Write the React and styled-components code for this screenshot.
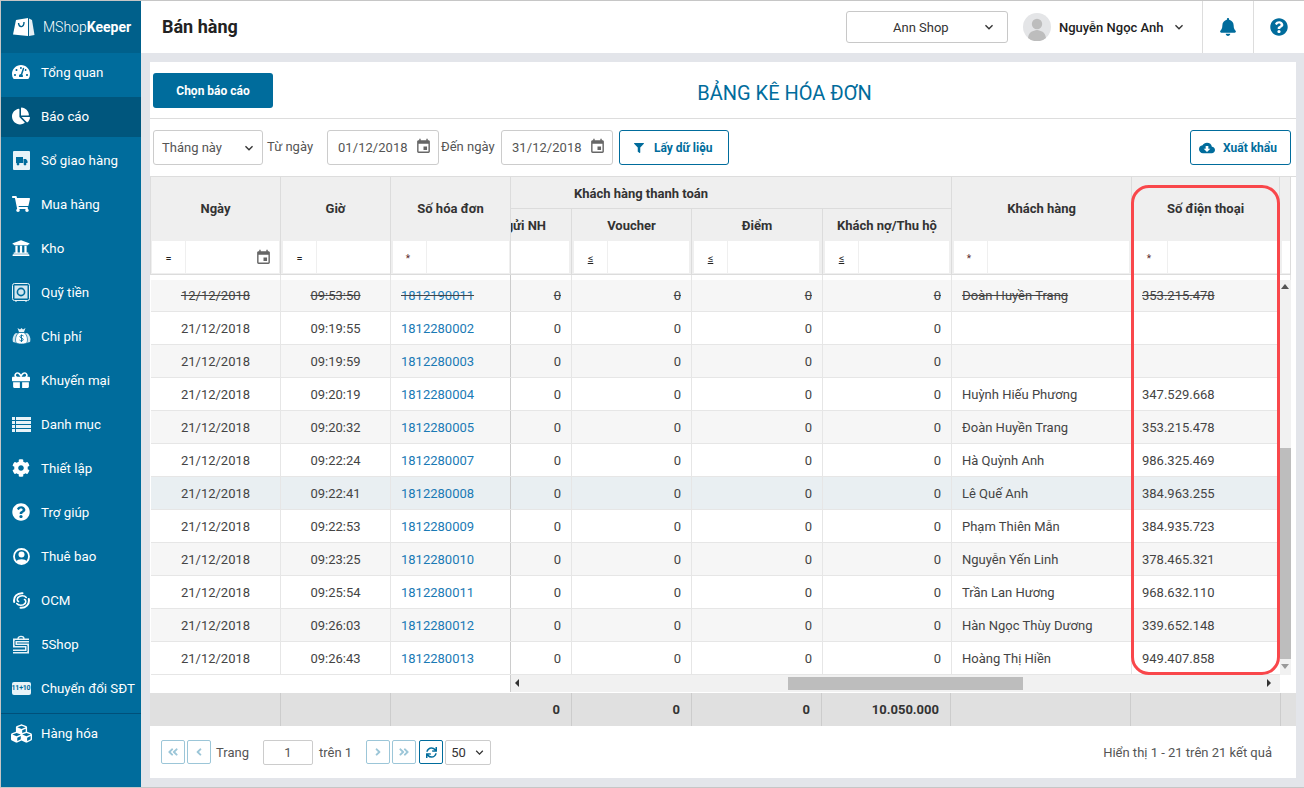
import React from 'react'
import styled, { createGlobalStyle } from 'styled-components'
import {
  FaTachometerAlt, FaChartPie, FaShoppingCart, FaUniversity, FaGift, FaCog, FaQuestionCircle,
  FaCubes, FaBell, FaFilter, FaSync, FaAngleDoubleLeft, FaAngleLeft, FaAngleRight, FaAngleDoubleRight,
} from 'react-icons/fa'
import { MdEvent, MdCloudDownload, MdKeyboardArrowDown } from 'react-icons/md'

const GlobalStyle = createGlobalStyle`
  html, body { margin: 0; padding: 0; background: #e3e5ea; }
  body { font-family: Roboto, "Noto Sans", sans-serif; font-size: 13px; color: #444; }
  * { box-sizing: border-box; }
`

const BLUE = '#006c9c'
const COLS = '130px 110px 120px 61px 120px 131px 129px 180px 148px 11px'
const BODY_COLS = '130px 110px 120px 61px 120px 131px 129px 180px 148px'

const Page = styled.div`
  width: 1304px;
  height: 788px;
  display: flex;
  border: 1px solid #c6c6c6;
  border-right: 0;
  overflow: hidden;
  background: #e3e5ea;
`
const Sidebar = styled.aside`
  width: 140px;
  flex: none;
  background: ${BLUE};
  color: #fff;
  display: flex;
  flex-direction: column;
`
const Logo = styled.div`
  height: 52px;
  flex: none;
  background: #00608b;
  display: flex;
  align-items: center;
  padding-left: 11px;
  gap: 8px;
  font-size: 14px;
  font-weight: 300;
  b { font-weight: 700; }
`
const NavList = styled.nav`
  display: flex;
  flex-direction: column;
  gap: 4px;
`
const NavItem = styled.div`
  height: 40px;
  display: flex;
  align-items: center;
  padding-bottom: 2px;
  background: ${p => (p.$active ? '#00567d' : 'transparent')};
  font-size: 13.3px;
`
const NavIcon = styled.span`
  width: 40px;
  flex: none;
  display: flex;
  justify-content: center;
  align-items: center;
  font-size: 18px;
`
const SwitchBadge = styled.span`
  width: 19px;
  height: 13px;
  border-radius: 2px;
  background: #e8f3f8;
  color: ${BLUE};
  font-size: 7px;
  font-weight: 700;
  display: flex;
  align-items: center;
  justify-content: center;
  letter-spacing: -0.2px;
`
const Divider = styled.div`
  border-top: 1px solid #00507a;
  margin-top: 4px;
`
const Main = styled.div`
  flex: 1;
  min-width: 0;
  display: flex;
  flex-direction: column;
`
const Header = styled.header`
  height: 52px;
  flex: none;
  background: #fff;
  display: flex;
  align-items: center;
  padding-left: 21px;
`
const PageTitle = styled.h1`
  flex: 1;
  margin: -2px 0 0;
  font-size: 18px;
  font-weight: 700;
  color: #222;
`
const ShopSelect = styled.div`
  width: 162px;
  height: 32px;
  border: 1px solid #c8c8c8;
  border-radius: 3px;
  display: flex;
  align-items: center;
  padding: 0 10px 0 46px;
  font-size: 13px;
  color: #333;
  justify-content: space-between;
  svg { font-size: 16px; color: #333; }
`
const UserBox = styled.div`
  width: 194px;
  flex: none;
  display: flex;
  align-items: center;
  padding-left: 15px;
  font-size: 13px;
  font-weight: 500;
  color: #222;
  gap: 8px;
  white-space: nowrap;
  svg.chev { font-size: 16px; color: #333; margin-left: -1px; }
`
const HeaderButton = styled.div`
  width: 51px;
  height: 52px;
  border-left: 1px solid #ddd;
  display: flex;
  align-items: center;
  justify-content: center;
  color: ${BLUE};
  font-size: 18px;
`
const Content = styled.div`
  flex: 1;
  min-height: 0;
  padding: 9px 8px 9px 9px;
  display: flex;
`
const Panel = styled.section`
  flex: 1;
  min-width: 0;
  background: #fff;
  display: flex;
  flex-direction: column;
`
const TitleBar = styled.div`
  height: 57px;
  flex: none;
  display: flex;
  align-items: center;
  padding-left: 3px;
  border-bottom: 1px solid #ddd;
`
const PrimaryButton = styled.button`
  width: 120px;
  height: 35px;
  margin-top: 1px;
  background: ${BLUE};
  color: #fff;
  border: 0;
  border-radius: 3px;
  font: 700 12px Roboto, sans-serif;
`
const ReportTitle = styled.h2`
  flex: 1;
  margin: 5px 0 0;
  text-align: center;
  font-size: 20px;
  font-weight: 400;
  color: ${BLUE};
`
const Toolbar = styled.div`
  height: 57px;
  flex: none;
  display: flex;
  align-items: center;
  padding: 0 4px 0 3px;
  color: #555;
`
const PeriodSelect = styled.div`
  width: 110px;
  height: 35px;
  border: 1px solid #ccc;
  border-radius: 3px;
  display: flex;
  align-items: center;
  justify-content: space-between;
  padding: 0 5px 0 8px;
  svg { font-size: 16px; color: #333; }
`
const FieldLabel = styled.span`
  margin: -2px 0 0 ${p => p.$ml || 4}px;
  width: ${p => p.$w}px;
  flex: none;
`
const DateBox = styled.div`
  width: 112px;
  height: 35px;
  border: 1px solid #ccc;
  border-radius: 3px;
  display: flex;
  align-items: center;
  justify-content: space-between;
  padding: 0 6px 0 10px;
  letter-spacing: 0.05px;
  svg { font-size: 17px; color: #666; margin-top: -2px; }
`
const OutlineButton = styled.button`
  width: ${p => p.$w}px;
  height: 35px;
  margin-left: ${p => p.$ml || 0}px;
  padding: 0 0 0 ${p => p.$pl}px;
  background: #fff;
  color: ${BLUE};
  border: 1px solid ${BLUE};
  border-radius: 3px;
  display: flex;
  align-items: center;
  gap: ${p => p.$gap}px;
  font: 700 12px Roboto, sans-serif;
`
const TableWrap = styled.div`
  flex: none;
  display: flex;
  flex-direction: column;
  padding-left: 1px;
  border-top: 1px solid #ddd;
`
const Head = styled.div`
  width: 1140px;
  flex: none;
  display: grid;
  grid-template-columns: ${COLS};
  grid-template-rows: 32px 32px 34px;
  background: #efefef;
  border-left: 1px solid #ddd;
  margin-left: -1px;
  font-weight: 700;
  color: #333;
  font-size: 13px;
`
const HeadCell = styled.div`
  grid-column: ${p => p.$col};
  grid-row: ${p => p.$row};
  display: flex;
  align-items: center;
  justify-content: ${p => (p.$end ? 'flex-end' : 'center')};
  padding-right: ${p => p.$pr || 0}px;
  padding-bottom: ${p => p.$pb || 0}px;
  padding-top: ${p => p.$pt || 0}px;
  border-right: 1px solid #dcdcdc;
  border-bottom: ${p => (p.$line ? '1px solid #dcdcdc' : '0')};
  white-space: nowrap;
  overflow: hidden;
`
const FilterCell = styled.div`
  display: flex;
  grid-row: 3;
  grid-column: ${p => p.$col};
  padding: 0 ${p => p.$pr ?? 1}px 1px ${p => p.$pl ?? 2}px;
  border-right: 1px solid #dcdcdc;
  border-bottom: 1px solid #dcdcdc;
  gap: 1px;
  background: #efefef;
`
const FilterOp = styled.span`
  width: 33px;
  flex: none;
  background: #fff;
  display: flex;
  align-items: center;
  justify-content: center;
  font-size: ${p => (p.$star ? 10 : 11)}px;
  font-weight: 400;
  color: ${p => (p.$star ? '#5c2b2b' : '#222')};
  padding: 2px ${p => (p.$star ? 3 : 0)}px 0 0;
  u { text-decoration-thickness: 1px; }
`
const FilterInput = styled.span`
  flex: 1;
  min-width: 0;
  background: #fff;
  display: flex;
  align-items: center;
  justify-content: flex-end;
  padding-right: 7px;
  svg { font-size: 17px; color: #666; }
`
const Spacer = styled.div`
  height: 5px;
  flex: none;
  width: 1140px;
  display: grid;
  grid-template-columns: ${COLS};
  div { border-right: 1px solid #e6e6e6; }
  div:nth-child(3) { border-right-color: #ccc; }
`
const BodyArea = styled.div`
  display: flex;
  flex: none;
  width: 1140px;
`
const Rows = styled.div`
  width: 1129px;
`
const Row = styled.div`
  display: grid;
  grid-template-columns: ${BODY_COLS};
  height: ${p => p.$h || 33}px;
  background: ${p => p.$bg};
  border-bottom: 1px solid #e6e6e6;
  text-decoration: ${p => (p.$struck ? 'line-through' : 'none')};
`
const Cell = styled.div`
  display: flex;
  align-items: center;
  justify-content: ${p => p.$align};
  padding: 0 10px;
  border-right: 1px solid ${p => (p.$frozen ? '#ccc' : '#e6e6e6')};
  white-space: nowrap;
  color: ${p => (p.$link ? '#1a7ab5' : '#444')};
  &:last-child { border-right: 0; }
`
const VScroll = styled.div`
  width: 11px;
  background: #f1f1f1;
  position: relative;
`
const ScrollArrow = styled.i`
  position: absolute;
  width: 0;
  height: 0;
  border: 4px solid transparent;
  ${p => p.$dir === 'up' && `top: 0; left: 1px; border-bottom-color: #555; border-width: 4px 4px 5px;`}
  ${p => p.$dir === 'down' && `top: 384px; left: 1px; border-top-color: #999; border-width: 5px 4px 4px;`}
  ${p => p.$dir === 'left' && `left: 4px; top: 4px; border-right-color: #333; border-width: 4px 4px 4px 0;`}
  ${p => p.$dir === 'right' && `right: 9px; top: 4px; border-left-color: #333; border-width: 4px 0 4px 4px;`}
`
const VThumb = styled.div`
  position: absolute;
  top: 168px;
  left: 0;
  width: 11px;
  height: 211px;
  background: #bdbdbd;
`
const HScrollRow = styled.div`
  width: 1140px;
  height: 17px;
  flex: none;
  display: flex;
`
const HBlank = styled.div`
  width: 360px;
  border-right: 1px solid #ccc;
`
const HTrack = styled.div`
  width: 769px;
  background: #f1f1f1;
  position: relative;
`
const HThumb = styled.div`
  position: absolute;
  left: 277px;
  top: 2px;
  width: 235px;
  height: 13px;
  background: #bdbdbd;
`
const Totals = styled.div`
  height: 33px;
  flex: none;
  margin: 1px 0 0 -1px;
  display: grid;
  grid-template-columns: 131px 110px 181px 120px 130px 129px 180px 150px 1fr;
  background: #e0e0e0;
  font-weight: 700;
  color: #333;
`
const TotalCell = styled.div`
  display: flex;
  align-items: center;
  justify-content: flex-end;
  padding-right: 11px;
  border-right: 1px solid #ccc;
  &:last-child { border-right: 0; }
`
const Pager = styled.div`
  flex: 1;
  display: flex;
  align-items: center;
  padding: 0 24px 0 11px;
  color: #555;
`
const PageButton = styled.button`
  width: 24px;
  height: 24px;
  padding: 0;
  margin-right: ${p => p.$mr ?? 2}px;
  background: #fff;
  border: 1px solid ${p => (p.$on ? BLUE : '#9cc6d8')};
  border-radius: 2px;
  color: ${p => (p.$on ? BLUE : '#9cc6d8')};
  display: flex;
  align-items: center;
  justify-content: center;
  font-size: ${p => p.$size || 12}px;
`
const PageLabel = styled.span`
  margin: 0 ${p => p.$mr}px 0 ${p => p.$ml}px;
`
const PageInput = styled.div`
  width: 50px;
  height: 25px;
  border: 1px solid #ccc;
  border-radius: 2px;
  display: flex;
  align-items: center;
  justify-content: center;
`
const PageSize = styled.div`
  width: 46px;
  height: 25px;
  border: 1px solid #ccc;
  border-radius: 2px;
  display: flex;
  align-items: center;
  justify-content: space-between;
  padding: 0 3px 0 5px;
  color: #333;
  svg { font-size: 15px; }
`
const PagerInfo = styled.span`
  margin-left: auto;
`
const Highlight = styled.div`
  position: absolute;
  left: 1131px;
  top: 185px;
  width: 149px;
  height: 490px;
  border: 3px solid #f9474b;
  border-radius: 18px;
  pointer-events: none;
`

const BagLogo = () => (
  <svg width="23" height="20" viewBox="0 0 23 20" fill="#fff">
    <path d="M4 3 L16 1 L16 19 L1 17.5 Z" />
    <path d="M17 1.5 L20 3 L22.5 18 L17 19 Z" opacity=".9" />
    <path d="M6.5 6 C7 11 12 11 12 5" fill="none" stroke="#00608b" strokeWidth="1.4" />
  </svg>
)
const TruckIcon = () => (
  <svg width="17" height="19" viewBox="0 0 17 19">
    <rect width="17" height="19" rx="1" fill="#e8f3f8" />
    <path d="M3 6h7v6H3zM10.5 8h2.5l1.5 2v2h-4z" fill={BLUE} />
    <circle cx="5" cy="13" r="1.4" fill={BLUE} /><circle cx="12" cy="13" r="1.4" fill={BLUE} />
  </svg>
)
const SafeIcon = () => (
  <svg width="18" height="19" viewBox="0 0 18 19">
    <rect x="0.5" y="0.5" width="17" height="17" rx="2" fill="none" stroke="#e8f3f8" />
    <rect x="2.5" y="2.5" width="13" height="13" fill="#d3e6ef" />
    <circle cx="9" cy="9" r="3.6" fill="none" stroke={BLUE} strokeWidth="1.6" />
    <path d="M3 18h2M13 18h2" stroke="#e8f3f8" />
  </svg>
)
const MoneyBagsIcon = () => (
  <svg width="19" height="18" viewBox="0 0 19 18">
    <path d="M4 6 C1 8 0 12 1 15 L5 16 L7 7Z" fill="#d3e6ef" />
    <path d="M15 6 C18 8 19 12 18 15 L14 16 L12 7Z" fill="#d3e6ef" />
    <path d="M5.5 1 L8 2.5 L9.5 1 L11 2.5 L13.5 1 L12 5 H7Z" fill="#e8f3f8" />
    <path d="M7 5.5 H12 C15.5 8 16 13 15 15.5 C14 17.5 5 17.5 4 15.5 C3 13 3.5 8 7 5.5Z" fill="#fff" stroke={BLUE} strokeWidth=".7" />
    <path d="M11.5 9 C10 7.8 7.5 8.5 8 10 C8.5 11.5 11.5 11 11.2 12.8 C10.8 14.2 8.5 14.2 7.5 13 M9.5 7.5 V15" fill="none" stroke={BLUE} strokeWidth=".9" />
  </svg>
)
const ListIcon = () => (
  <svg width="19" height="15" viewBox="0 0 19 15" fill="#e8f3f8">
    <path d="M0 0h3v3H0zM4 0h15v3H4zM0 4h3v3H0zM4 4h15v3H4zM0 8h3v3H0zM4 8h15v3H4zM0 12h3v3H0zM4 12h15v3H4z" />
  </svg>
)
const UserIcon = () => (
  <svg width="17" height="17" viewBox="0 0 17 17">
    <circle cx="8.5" cy="8.5" r="7.5" fill="none" stroke="#fff" strokeWidth="1.8" />
    <circle cx="8.5" cy="6.5" r="3" fill="#fff" />
    <path d="M3.5 13.5 C4 10.5 13 10.5 13.5 13.5 L11 16 H6Z" fill="#fff" />
  </svg>
)
const OcmIcon = () => (
  <svg width="17" height="17" viewBox="0 0 17 17" fill="none" stroke="#fff" strokeLinecap="round">
    <path d="M1.2 10 C0.2 4.5 4.5 0.8 9.5 1.2" strokeWidth="2" />
    <path d="M15.8 7 C16.8 12.5 12.5 16.2 7.5 15.8" strokeWidth="2" />
    <path d="M3.8 11.5 C5.5 14 10 13.8 12 11.5" strokeWidth="1.6" />
    <path d="M13.2 5.5 C11.5 3 7 3.2 5 5.5" strokeWidth="1.6" />
    <path d="M5 5.5 C3.8 7 4 9 5.5 9.5 M12 11.5 C13.2 10 13 8 11.5 7.5" strokeWidth="1.6" />
  </svg>
)
const FiveShopIcon = () => (
  <svg width="18" height="19" viewBox="0 0 18 19" fill="none">
    <path d="M6 4 C6 0.5 12 0.5 12 4" stroke="#e8f3f8" strokeWidth="1.4" />
    <path d="M17 5.5 H3 V10.5 H15 V16.5 H1" stroke="#e8f3f8" strokeWidth="4" />
    <path d="M17 5.5 H3 V10.5 H15 V16.5 H1" stroke={BLUE} strokeWidth="1" />
  </svg>
)
const Avatar = () => (
  <svg width="28" height="28" viewBox="0 0 28 28">
    <circle cx="14" cy="14" r="14" fill="#e4e5e7" />
    <circle cx="14" cy="11" r="5.2" fill="#bdbdbd" />
    <path d="M5 25 C6 18 10 18 14 17 C18 18 22 18 23 25 A14 14 0 0 1 5 25Z" fill="#bdbdbd" />
  </svg>
)

const NAV = [
  ['Tổng quan', <FaTachometerAlt />],
  ['Báo cáo', <FaChartPie />, true],
  ['Sổ giao hàng', <TruckIcon />],
  ['Mua hàng', <FaShoppingCart />],
  ['Kho', <FaUniversity />],
  ['Quỹ tiền', <SafeIcon />],
  ['Chi phí', <MoneyBagsIcon />],
  ['Khuyến mại', <FaGift />],
  ['Danh mục', <ListIcon />],
  ['Thiết lập', <FaCog />],
  ['Trợ giúp', <FaQuestionCircle />],
  ['Thuê bao', <UserIcon />],
  ['OCM', <OcmIcon />],
  ['5Shop', <FiveShopIcon />],
  ['Chuyển đổi SĐT', <SwitchBadge>11+10</SwitchBadge>],
]

const ROWS = [
  ['12/12/2018', '09:53:50', '1812190011', 'Đoàn Huyền Trang', '353.215.478'],
  ['21/12/2018', '09:19:55', '1812280002', '', ''],
  ['21/12/2018', '09:19:59', '1812280003', '', ''],
  ['21/12/2018', '09:20:19', '1812280004', 'Huỳnh Hiếu Phương', '347.529.668'],
  ['21/12/2018', '09:20:32', '1812280005', 'Đoàn Huyền Trang', '353.215.478'],
  ['21/12/2018', '09:22:24', '1812280007', 'Hà Quỳnh Anh', '986.325.469'],
  ['21/12/2018', '09:22:41', '1812280008', 'Lê Quế Anh', '384.963.255'],
  ['21/12/2018', '09:22:53', '1812280009', 'Phạm Thiên Mẫn', '384.935.723'],
  ['21/12/2018', '09:23:25', '1812280010', 'Nguyễn Yến Linh', '378.465.321'],
  ['21/12/2018', '09:25:54', '1812280011', 'Trần Lan Hương', '968.632.110'],
  ['21/12/2018', '09:26:03', '1812280012', 'Hàn Ngọc Thùy Dương', '339.652.148'],
  ['21/12/2018', '09:26:43', '1812280013', 'Hoàng Thị Hiền', '949.407.858'],
]

const rowBg = i => {
  if (i === 6) return '#e9eff2'
  return i % 2 === 0 ? '#f6f6f6' : '#fff'
}

const FILTERS = [
  { col: 1, op: '=', pl: 1, pr: 1, date: true },
  { col: 2, op: '=', pr: 0 },
  { col: 3, op: '*', pr: 1 },
  { col: 4, noOp: true, pl: 0, pr: 2 },
  { col: 5, op: '≤', pr: 2 },
  { col: 6, op: '≤', pr: 3 },
  { col: 7, op: '≤', pr: 2 },
  { col: 8, op: '*', pr: 2 },
  { col: 9, op: '*', pr: 2 },
  { col: 10, noOp: true, pr: 0 },
]

export default function App() {
  return (
    <Page>
      <GlobalStyle />
      <Sidebar>
        <Logo><BagLogo /><span>MShop<b>Keeper</b></span></Logo>
        <NavList>
          {NAV.map(([label, icon, active]) => (
            <NavItem key={label} $active={active}>
              <NavIcon>{icon}</NavIcon>{label}
            </NavItem>
          ))}
        </NavList>
        <Divider>
          <NavItem><NavIcon><FaCubes size={21} /></NavIcon>Hàng hóa</NavItem>
        </Divider>
      </Sidebar>
      <Main>
        <Header>
          <PageTitle>Bán hàng</PageTitle>
          <ShopSelect>Ann Shop<MdKeyboardArrowDown /></ShopSelect>
          <UserBox><Avatar />Nguyễn Ngọc Anh<MdKeyboardArrowDown className="chev" /></UserBox>
          <HeaderButton><FaBell /></HeaderButton>
          <HeaderButton><FaQuestionCircle /></HeaderButton>
        </Header>
        <Content>
          <Panel>
            <TitleBar>
              <PrimaryButton>Chọn báo cáo</PrimaryButton>
              <ReportTitle>BẢNG KÊ HÓA ĐƠN</ReportTitle>
            </TitleBar>
            <Toolbar>
              <PeriodSelect>Tháng này<MdKeyboardArrowDown /></PeriodSelect>
              <FieldLabel $w={60}>Từ ngày</FieldLabel>
              <DateBox>01/12/2018<MdEvent /></DateBox>
              <FieldLabel $w={60} $ml={2}>Đến ngày</FieldLabel>
              <DateBox>31/12/2018<MdEvent /></DateBox>
              <OutlineButton $w={110} $ml={6} $pl={14} $gap={10}><FaFilter size={10} />Lấy dữ liệu</OutlineButton>
              <OutlineButton $w={101} $ml={461} $pl={8} $gap={8}><MdCloudDownload size={16} />Xuất khẩu</OutlineButton>
            </Toolbar>
            <TableWrap>
              <Head>
                <HeadCell $col="1" $row="1 / 3" $pb={2}>Ngày</HeadCell>
                <HeadCell $col="2" $row="1 / 3" $pb={2}>Giờ</HeadCell>
                <HeadCell $col="3" $row="1 / 3" $pb={2}>Số hóa đơn</HeadCell>
                <HeadCell $col="4 / 8" $row="1" $line $pr={180} $pt={1}>Khách hàng thanh toán</HeadCell>
                <HeadCell $col="4" $row="2" $end $pr={25}>Tiền gửi NH</HeadCell>
                <HeadCell $col="5" $row="2">Voucher</HeadCell>
                <HeadCell $col="6" $row="2">Điểm</HeadCell>
                <HeadCell $col="7" $row="2">Khách nợ/Thu hộ</HeadCell>
                <HeadCell $col="8" $row="1 / 3" $pb={2}>Khách hàng</HeadCell>
                <HeadCell $col="9" $row="1 / 3" $pb={2}>Số điện thoại</HeadCell>
                <HeadCell $col="10" $row="1 / 3" />
                {FILTERS.map(f => (
                  <FilterCell key={f.col} $col={f.col} $pl={f.pl} $pr={f.pr}>
                    {!f.noOp && <FilterOp $star={f.op === '*'}>{f.op === '≤' ? <u>≤</u> : f.op}</FilterOp>}
                    <FilterInput>{f.date && <MdEvent />}</FilterInput>
                  </FilterCell>
                ))}
              </Head>
              <Spacer>
                {Array.from({ length: 10 }, (_, i) => <div key={i} />)}
              </Spacer>
              <BodyArea>
                <Rows>
                  {ROWS.map((r, i) => (
                    <Row key={r[2]} $bg={rowBg(i)} $struck={i === 0} $h={i === 0 ? 32 : 33}>
                      <Cell $align="center">{r[0]}</Cell>
                      <Cell $align="center">{r[1]}</Cell>
                      <Cell $align="flex-start" $link $frozen>{r[2]}</Cell>
                      <Cell $align="flex-end">0</Cell>
                      <Cell $align="flex-end">0</Cell>
                      <Cell $align="flex-end">0</Cell>
                      <Cell $align="flex-end">0</Cell>
                      <Cell $align="flex-start">{r[3]}</Cell>
                      <Cell $align="flex-start">{r[4]}</Cell>
                    </Row>
                  ))}
                </Rows>
                <VScroll>
                  <ScrollArrow $dir="up" />
                  <VThumb />
                  <ScrollArrow $dir="down" />
                </VScroll>
              </BodyArea>
              <HScrollRow>
                <HBlank />
                <HTrack>
                  <ScrollArrow $dir="left" />
                  <HThumb />
                  <ScrollArrow $dir="right" />
                </HTrack>
              </HScrollRow>
              <Totals>
                <TotalCell />
                <TotalCell />
                <TotalCell>0</TotalCell>
                <TotalCell>0</TotalCell>
                <TotalCell>0</TotalCell>
                <TotalCell>10.050.000</TotalCell>
                <TotalCell />
                <TotalCell />
                <TotalCell />
              </Totals>
            </TableWrap>
            <Pager>
              <PageButton><FaAngleDoubleLeft /></PageButton>
              <PageButton $mr={0}><FaAngleLeft /></PageButton>
              <PageLabel $ml={5} $mr={14}>Trang</PageLabel>
              <PageInput>1</PageInput>
              <PageLabel $ml={6} $mr={14}>trên 1</PageLabel>
              <PageButton><FaAngleRight /></PageButton>
              <PageButton $mr={3}><FaAngleDoubleRight /></PageButton>
              <PageButton $on $size={11} $mr={2}><FaSync /></PageButton>
              <PageSize>50<MdKeyboardArrowDown /></PageSize>
              <PagerInfo>Hiển thị 1 - 21 trên 21 kết quả</PagerInfo>
            </Pager>
          </Panel>
        </Content>
      </Main>
      <Highlight />
    </Page>
  )
}
